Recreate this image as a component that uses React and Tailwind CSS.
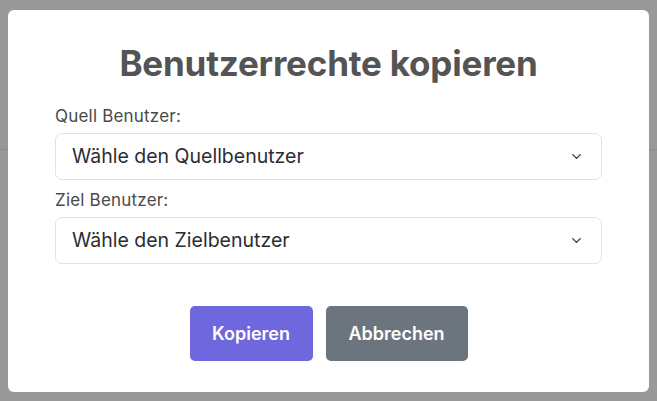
import { ChevronDown } from 'lucide-react';

function SelectField({ label, placeholder }) {
  return (
    <div className="flex flex-col">
      <label className="text-[17px] leading-[20px] tracking-[0.2px] text-[#4a4a4a] mb-[7px]">{label}</label>
      <div className="flex items-center justify-between h-[47px] border border-[#dee2e6] rounded-[7px] pl-[16px] pr-[17px] bg-white">
        <span className="text-[19.5px] text-[#2b2d33]">{placeholder}</span>
        <ChevronDown className="w-[15px] h-[15px] text-[#343a40]" strokeWidth={2.2} />
      </div>
    </div>
  );
}

export default function App() {
  return (
    <div className="relative w-[657px] h-[401px] bg-[#999999] overflow-hidden" style={{ fontFamily: 'Inter, "Noto Sans", sans-serif' }}>
      <div className="h-[150px] border-b border-[#8c8c8c]" />

      <div className="absolute left-[8px] top-[10px] w-[641px] h-[382px] bg-white rounded-[6px] px-[47px] pt-[31px]">
        <h2 className="text-center text-[35px] leading-[44px] font-bold text-[#545454] tracking-[-0.2px]">
          Benutzerrechte kopieren
        </h2>

        <div className="mt-[21px] flex flex-col gap-[10px]">
          <SelectField label="Quell Benutzer:" placeholder="Wähle den Quellbenutzer" />
          <SelectField label="Ziel Benutzer:" placeholder="Wähle den Zielbenutzer" />
        </div>

        <div className="mt-[42px] flex justify-center gap-[13px]">
          <button className="w-[123px] h-[55px] rounded-[5px] bg-[#6f67de] text-white text-[18px] font-semibold">
            Kopieren
          </button>
          <button className="w-[142px] h-[55px] rounded-[5px] bg-[#6c757d] text-white text-[18px] font-semibold">
            Abbrechen
          </button>
        </div>
      </div>
    </div>
  );
}
